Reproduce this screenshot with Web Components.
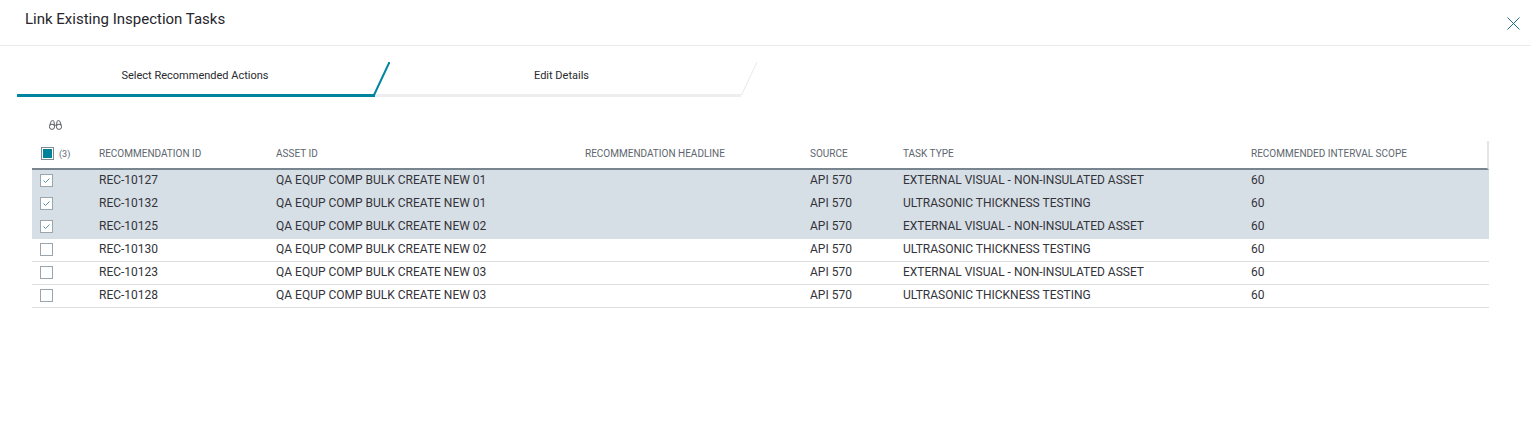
<!DOCTYPE html>
<html>
<head>
<meta charset="utf-8">
<title>Link Existing Inspection Tasks</title>
<style>
  html, body { margin: 0; background: #fff; }
  body { font-family: "Roboto", "Liberation Sans", sans-serif; color: #2f2f35; }
</style>
</head>
<body>
<link-dialog heading="Link Existing Inspection Tasks">
  <step-tabs></step-tabs>
  <grid-toolbar></grid-toolbar>
  <rec-grid></rec-grid>
</link-dialog>

<script>
const COLUMNS = '67px 177px 309px 225px 93px 348px 237px';

class LinkDialog extends HTMLElement {
    constructor() {
        super();
        this.attachShadow({ mode: 'open' });
        this.shadowRoot.innerHTML = `
            <style>
                :host { display: block; height: 444px; overflow: hidden; }
                header {
                    display: flex;
                    justify-content: space-between;
                    height: 46px;
                    box-sizing: border-box;
                    padding: 11px 11px 0 25px;
                    border-bottom: 1px solid #ebebeb;
                }
                h1 { margin: 0; font-size: 15px; line-height: 17px; font-weight: 400; color: #26262c; }
                svg { margin-top: 6px; }
            </style>
            <header>
                <h1></h1>
                <svg width="13" height="13" viewBox="0 0 13 13" fill="none" stroke="#1f6f86" stroke-width="1">
                    <path d="M0.5 0.5L12.5 12.5M12.5 0.5L0.5 12.5"/>
                </svg>
            </header>
            <slot></slot>
        `;
    }

    connectedCallback() {
        this.shadowRoot.querySelector('h1').textContent = this.getAttribute('heading');
    }
}

class StepTabs extends HTMLElement {
    constructor() {
        super();
        this.attachShadow({ mode: 'open' });
        this.shadowRoot.innerHTML = `
            <style>
                :host { display: flex; align-items: flex-end; height: 51px; padding-left: 17px; }
                .tab {
                    box-sizing: border-box;
                    height: 35px;
                    padding-top: 7px;
                    text-align: center;
                    font-size: 11px;
                    line-height: 14px;
                    color: #2a2a30;
                    border-bottom: 3px solid #eeeeee;
                }
                .active { width: 356px; border-bottom-color: #00849f; }
                .next { width: 351px; text-indent: -8px; }
                svg { display: block; flex: none; }
            </style>
            <div class="tab active">Select Recommended Actions</div>
            <svg width="17" height="35" viewBox="0 0 17 35">
                <rect x="2" y="32" width="15" height="3" fill="#eeeeee"/>
                <path d="M16.5 0L0.8 33.5" fill="none" stroke="#00849f" stroke-width="2"/>
                <rect x="0" y="32" width="2" height="3" fill="#00849f"/>
            </svg>
            <div class="tab next">Edit Details</div>
            <svg width="17" height="35" viewBox="0 0 17 35">
                <path d="M16 0L0.5 33" fill="none" stroke="#e8e8e8" stroke-width="1"/>
            </svg>
        `;
    }
}

class GridToolbar extends HTMLElement {
    constructor() {
        super();
        this.attachShadow({ mode: 'open' });
        this.shadowRoot.innerHTML = `
            <style>
                :host { display: block; height: 44px; box-sizing: border-box; padding: 23px 0 0 49px; }
                svg { display: block; }
            </style>
            <svg width="13" height="10" viewBox="0 0 13 10" fill="none" stroke="#4a4f55" stroke-width="0.9">
                <circle cx="3" cy="6.8" r="2.6"/>
                <circle cx="10" cy="6.8" r="2.6"/>
                <path d="M5.4 5.6C6 5.2 7 5.2 7.6 5.6"/>
                <path d="M.7 5.4L2.2 1.2C2.6.4 4.6.4 4.9 1.2L5.5 5.2"/>
                <path d="M12.3 5.4L10.8 1.2C10.4.4 8.4.4 8.1 1.2L7.5 5.2"/>
            </svg>
        `;
    }
}

class RowCheck extends HTMLElement {
    constructor() {
        super();
        this.attachShadow({ mode: 'open' });
        this.shadowRoot.innerHTML = `
            <style>
                :host {
                    display: block;
                    box-sizing: border-box;
                    width: 13px;
                    height: 13px;
                    border: 1px solid #9aa5ad;
                    background: #fff;
                }
                svg { display: none; }
                :host([checked]) svg { display: block; }
                :host([mixed]) { border: 1px solid #7f8a92; padding: 1px; background-clip: content-box; background-color: #00829b; }
            </style>
            <svg width="11" height="11" viewBox="0 0 11 11" fill="none" stroke="#5b8fb0" stroke-width="1">
                <path d="M2.5 5.5L4.5 7.5L8.5 3.5"/>
            </svg>
        `;
    }
}

class GridRow extends HTMLElement {
    constructor() {
        super();
        this.attachShadow({ mode: 'open' });
        this.shadowRoot.innerHTML = `
            <style>
                :host {
                    display: grid;
                    grid-template-columns: ${COLUMNS};
                    align-items: center;
                    height: 23px;
                    box-sizing: border-box;
                    padding-bottom: 2px;
                    border-bottom: 1px solid #dcdfe2;
                    font-size: 12px;
                    color: #33333a;
                }
                :host([selected]) { background: #d7dfe6; border-bottom-color: #d7dfe6; }
                .check { padding-left: 8px; }
            </style>
            <div class="check"><row-check></row-check></div>
        `;
    }

    set row(row) {
        const check = this.shadowRoot.querySelector('row-check');
        if (row.selected) {
            this.setAttribute('selected', '');
            check.setAttribute('checked', '');
        }
        row.cells.forEach((text) => {
            const cell = document.createElement('div');
            cell.textContent = text;
            this.shadowRoot.appendChild(cell);
        });
    }
}

class RecGrid extends HTMLElement {
    constructor() {
        super();
        this.attachShadow({ mode: 'open' });
        this.shadowRoot.innerHTML = `
            <style>
                :host { display: block; margin: 0 42px 0 32px; }
                .head {
                    display: grid;
                    grid-template-columns: ${COLUMNS};
                    align-items: center;
                    height: 29px;
                    box-sizing: border-box;
                    padding-bottom: 2px;
                    border-bottom: 2px solid #78858f;
                    border-right: 2px solid #e4e4e4;
                    font-size: 10px;
                    color: #5d666e;
                }
                .all { display: flex; align-items: center; gap: 5px; padding-left: 9px; font-size: 9px; }
            </style>
            <div class="head">
                <div class="all"><row-check mixed></row-check><span>(3)</span></div>
                <div>RECOMMENDATION ID</div>
                <div>ASSET ID</div>
                <div>RECOMMENDATION HEADLINE</div>
                <div>SOURCE</div>
                <div>TASK TYPE</div>
                <div>RECOMMENDED INTERVAL SCOPE</div>
            </div>
            <div class="body"></div>
        `;
    }

    connectedCallback() {
        const visual = 'EXTERNAL VISUAL - NON-INSULATED ASSET';
        const ultra = 'ULTRASONIC THICKNESS TESTING';
        const rows = [
            ['REC-10127', '01', visual, true],
            ['REC-10132', '01', ultra, true],
            ['REC-10125', '02', visual, true],
            ['REC-10130', '02', ultra, false],
            ['REC-10123', '03', visual, false],
            ['REC-10128', '03', ultra, false],
        ];
        const body = this.shadowRoot.querySelector('.body');
        rows.forEach(([id, num, task, selected]) => {
            const row = document.createElement('grid-row');
            row.row = {
                selected,
                cells: [id, `QA EQUP COMP BULK CREATE NEW ${num}`, '', 'API 570', task, '60'],
            };
            body.appendChild(row);
        });
    }
}

customElements.define('link-dialog', LinkDialog);
customElements.define('step-tabs', StepTabs);
customElements.define('grid-toolbar', GridToolbar);
customElements.define('row-check', RowCheck);
customElements.define('grid-row', GridRow);
customElements.define('rec-grid', RecGrid);
</script>
</body>
</html>
